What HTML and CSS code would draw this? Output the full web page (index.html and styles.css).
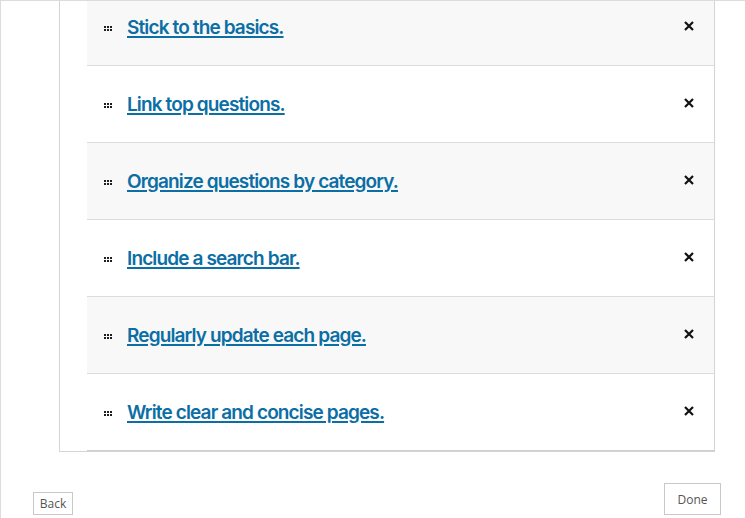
FILE: index.html
```html
<!DOCTYPE html>
<html lang="en">
<head>
<meta charset="utf-8">
<title>Sortable list</title>
<link rel="stylesheet" href="styles.css">
</head>
<body>
<div class="frame">
  <div class="card">
    <ul class="list">
      <li class="row"><span class="handle"><svg width="8" height="5" viewBox="0 0 8 5"><rect x="0" y="0" width="2" height="2"/><rect x="3" y="0" width="2" height="2"/><rect x="6" y="0" width="2" height="2"/><rect x="0" y="3" width="2" height="2"/><rect x="3" y="3" width="2" height="2"/><rect x="6" y="3" width="2" height="2"/></svg></span><a class="link" href="#">Stick to the basics.</a><span class="remove"><svg width="10" height="10" viewBox="0 0 10 10"><path d="M1 1L9 9M9 1L1 9"/></svg></span></li>
      <li class="row"><span class="handle"><svg width="8" height="5" viewBox="0 0 8 5"><rect x="0" y="0" width="2" height="2"/><rect x="3" y="0" width="2" height="2"/><rect x="6" y="0" width="2" height="2"/><rect x="0" y="3" width="2" height="2"/><rect x="3" y="3" width="2" height="2"/><rect x="6" y="3" width="2" height="2"/></svg></span><a class="link" href="#">Link top questions.</a><span class="remove"><svg width="10" height="10" viewBox="0 0 10 10"><path d="M1 1L9 9M9 1L1 9"/></svg></span></li>
      <li class="row"><span class="handle"><svg width="8" height="5" viewBox="0 0 8 5"><rect x="0" y="0" width="2" height="2"/><rect x="3" y="0" width="2" height="2"/><rect x="6" y="0" width="2" height="2"/><rect x="0" y="3" width="2" height="2"/><rect x="3" y="3" width="2" height="2"/><rect x="6" y="3" width="2" height="2"/></svg></span><a class="link" href="#">Organize questions by category.</a><span class="remove"><svg width="10" height="10" viewBox="0 0 10 10"><path d="M1 1L9 9M9 1L1 9"/></svg></span></li>
      <li class="row"><span class="handle"><svg width="8" height="5" viewBox="0 0 8 5"><rect x="0" y="0" width="2" height="2"/><rect x="3" y="0" width="2" height="2"/><rect x="6" y="0" width="2" height="2"/><rect x="0" y="3" width="2" height="2"/><rect x="3" y="3" width="2" height="2"/><rect x="6" y="3" width="2" height="2"/></svg></span><a class="link" href="#">Include a search bar.</a><span class="remove"><svg width="10" height="10" viewBox="0 0 10 10"><path d="M1 1L9 9M9 1L1 9"/></svg></span></li>
      <li class="row"><span class="handle"><svg width="8" height="5" viewBox="0 0 8 5"><rect x="0" y="0" width="2" height="2"/><rect x="3" y="0" width="2" height="2"/><rect x="6" y="0" width="2" height="2"/><rect x="0" y="3" width="2" height="2"/><rect x="3" y="3" width="2" height="2"/><rect x="6" y="3" width="2" height="2"/></svg></span><a class="link" href="#">Regularly update each page.</a><span class="remove"><svg width="10" height="10" viewBox="0 0 10 10"><path d="M1 1L9 9M9 1L1 9"/></svg></span></li>
      <li class="row"><span class="handle"><svg width="8" height="5" viewBox="0 0 8 5"><rect x="0" y="0" width="2" height="2"/><rect x="3" y="0" width="2" height="2"/><rect x="6" y="0" width="2" height="2"/><rect x="0" y="3" width="2" height="2"/><rect x="3" y="3" width="2" height="2"/><rect x="6" y="3" width="2" height="2"/></svg></span><a class="link" href="#">Write clear and concise pages.</a><span class="remove"><svg width="10" height="10" viewBox="0 0 10 10"><path d="M1 1L9 9M9 1L1 9"/></svg></span></li>
    </ul>
  </div>
  <div class="footer">
    <button class="btn btn-back">Back</button>
    <button class="btn btn-done">Done</button>
  </div>
</div>
</body>
</html>
```

FILE: styles.css
```css
* { box-sizing: border-box; }
html, body { margin: 0; padding: 0; background: #fff; }
body { width: 745px; height: 518px; overflow: hidden; font-family: "Open Sans", "Noto Sans", sans-serif; }

.frame {
  height: 518px;
  border-top: 1px solid #dcdcde;
  border-left: 1px solid #dcdcde;
  display: flex;
  flex-direction: column;
}

.card {
  margin-left: 58px;
  width: 656px;
  border-left: 1px solid #d4d4d4;
  border-right: 1px solid #d4d4d4;
  border-bottom: 1px solid #d4d4d4;
  padding-left: 27px;
  overflow: hidden;
}

.list {
  list-style: none;
  margin: -12px 0 0 0;
  padding: 0;
}

.row {
  height: 77px;
  display: flex;
  align-items: center;
  padding-left: 17px;
  padding-right: 20px;
  border-bottom: 1px solid #dcdcde;
  background: #fff;
}
.row:nth-child(odd) { background: #f8f8f8; }
.row:last-child { border-bottom-color: #cfcfd1; }

.handle { display: flex; width: 23px; margin-top: 2px; }
.handle svg { fill: #1e1e1e; }

.link {
  font-family: Inter, "Noto Sans", sans-serif;
  font-weight: 600;
  font-size: 19px;
  letter-spacing: -0.87px;
  color: #0b6ea5;
  text-decoration: underline;
  text-decoration-thickness: 2px;
  text-underline-offset: 2px;
  flex: 1;
  line-height: 24px;
  margin-top: 2px;
}

.remove { display: flex; margin-top: -2px; }
.remove svg { stroke: #111; stroke-width: 2.2; fill: none; }

.footer {
  flex: 1;
  display: flex;
  justify-content: space-between;
  align-items: flex-end;
  padding: 0 24px 3px 32px;
}

.btn {
  font-family: "Open Sans", "Noto Sans", sans-serif;
  font-size: 12px;
  color: #555;
  background: #fff;
  border: 1px solid #c8c8c8;
  border-radius: 0;
  padding: 0;
}
.btn-back { width: 40px; height: 23px; }
.btn-done { width: 57px; height: 32px; }
```
